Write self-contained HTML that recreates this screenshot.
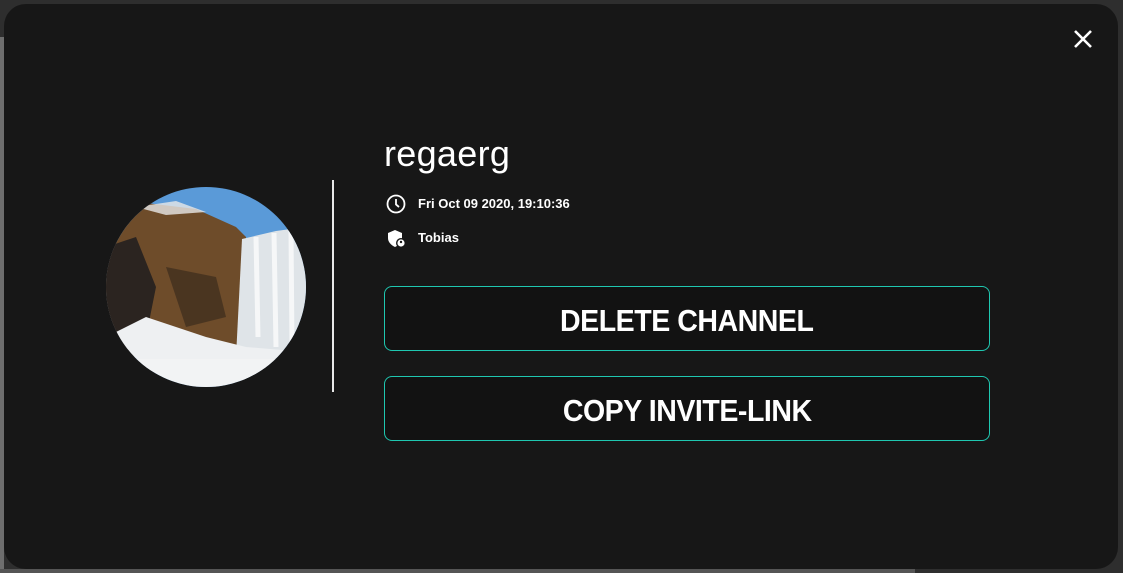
<!DOCTYPE html>
<html><head><style>
html,body{margin:0;padding:0;width:1123px;height:573px;overflow:hidden;background:#2e2e2e;font-family:"Liberation Sans",sans-serif;}
.lstrip{position:absolute;left:0;top:37px;width:4px;height:536px;background:#6e6e6e;}
.bstrip{position:absolute;left:0;top:569px;width:915px;height:4px;background:#555;}
.modal{position:absolute;left:4px;top:4px;width:1114px;height:565px;background:#171717;border-radius:22px;}
.close{position:absolute;left:1073px;top:29px;}
.circle{position:absolute;left:106px;top:187px;width:200px;height:200px;border-radius:50%;overflow:hidden;}
.vline{position:absolute;left:332px;top:180px;width:2px;height:212px;background:#e8e8e8;}
.name{position:absolute;left:384px;top:133px;color:#fff;font-size:36px;letter-spacing:0.3px;}
.row{position:absolute;left:386px;color:#fff;font-size:13px;font-weight:bold;}
.btn{position:absolute;left:384px;width:604px;height:63px;border:1px solid #1fc7b0;border-radius:8px;background:#121212;color:#fff;font-weight:bold;font-size:31px;text-align:center;line-height:67px;}
.btn span{display:inline-block;transform:scaleX(0.92);letter-spacing:-0.5px;}
</style></head><body>
<div class="lstrip"></div><div class="bstrip"></div>
<div class="modal"></div>
<svg class="close" width="20" height="20" viewBox="0 0 20 20"><path d="M2 2L18 18M18 2L2 18" stroke="#fff" stroke-width="2.6"/></svg>
<div class="circle">
<svg width="200" height="200" viewBox="0 0 200 200">
<rect width="200" height="200" fill="#5a9ad8"/>
<path d="M0 30 L40 16 L90 22 L130 40 L140 50 L140 170 L0 170Z" fill="#6e4c2a"/>
<path d="M30 20 L70 14 L100 25 L60 28 Z" fill="#e8e8e8" opacity=".8"/>
<path d="M0 60 L30 50 L50 100 L40 150 L0 150Z" fill="#2b2420"/>
<path d="M60 80 L110 90 L120 130 L80 140Z" fill="#4a3520"/>
<path d="M136 52 L170 44 L200 40 L200 170 L130 170Z" fill="#dfe4e8"/>
<path d="M150 50 L152 150 M168 46 L170 160 M185 44 L186 160" stroke="#fff" stroke-width="5" opacity=".7"/>
<path d="M0 180 L0 150 L40 130 L100 150 L140 160 L200 165 L200 200Z" fill="#eef0f2"/>
<rect x="0" y="172" width="200" height="28" fill="#f2f3f4"/>
</svg></div>
<div class="vline"></div>
<div class="name">regaerg</div>
<svg style="position:absolute;left:386px;top:194px" width="20" height="20" viewBox="0 0 20 20"><circle cx="10" cy="10" r="8.5" fill="none" stroke="#fff" stroke-width="1.8"/><path d="M10 5V10.5L13 13" fill="none" stroke="#fff" stroke-width="1.8"/></svg>
<div class="row" style="left:418px;top:196px">Fri Oct 09 2020, 19:10:36</div>
<svg style="position:absolute;left:387px;top:229px" width="20" height="20" viewBox="0 0 20 20"><path d="M8 1L15 4V9C15 13 12 16 8 18C4 16 1 13 1 9V4Z" fill="#fff"/><circle cx="14" cy="14" r="5" fill="#171717"/><circle cx="14" cy="14" r="3.6" fill="#fff"/><circle cx="14" cy="13" r="1.2" fill="#171717"/></svg>
<div class="row" style="left:418px;top:230px">Tobias</div>
<div class="btn" style="top:286px"><span>DELETE CHANNEL</span></div>
<div class="btn" style="top:376px"><span>COPY INVITE-LINK</span></div>
</body></html>
